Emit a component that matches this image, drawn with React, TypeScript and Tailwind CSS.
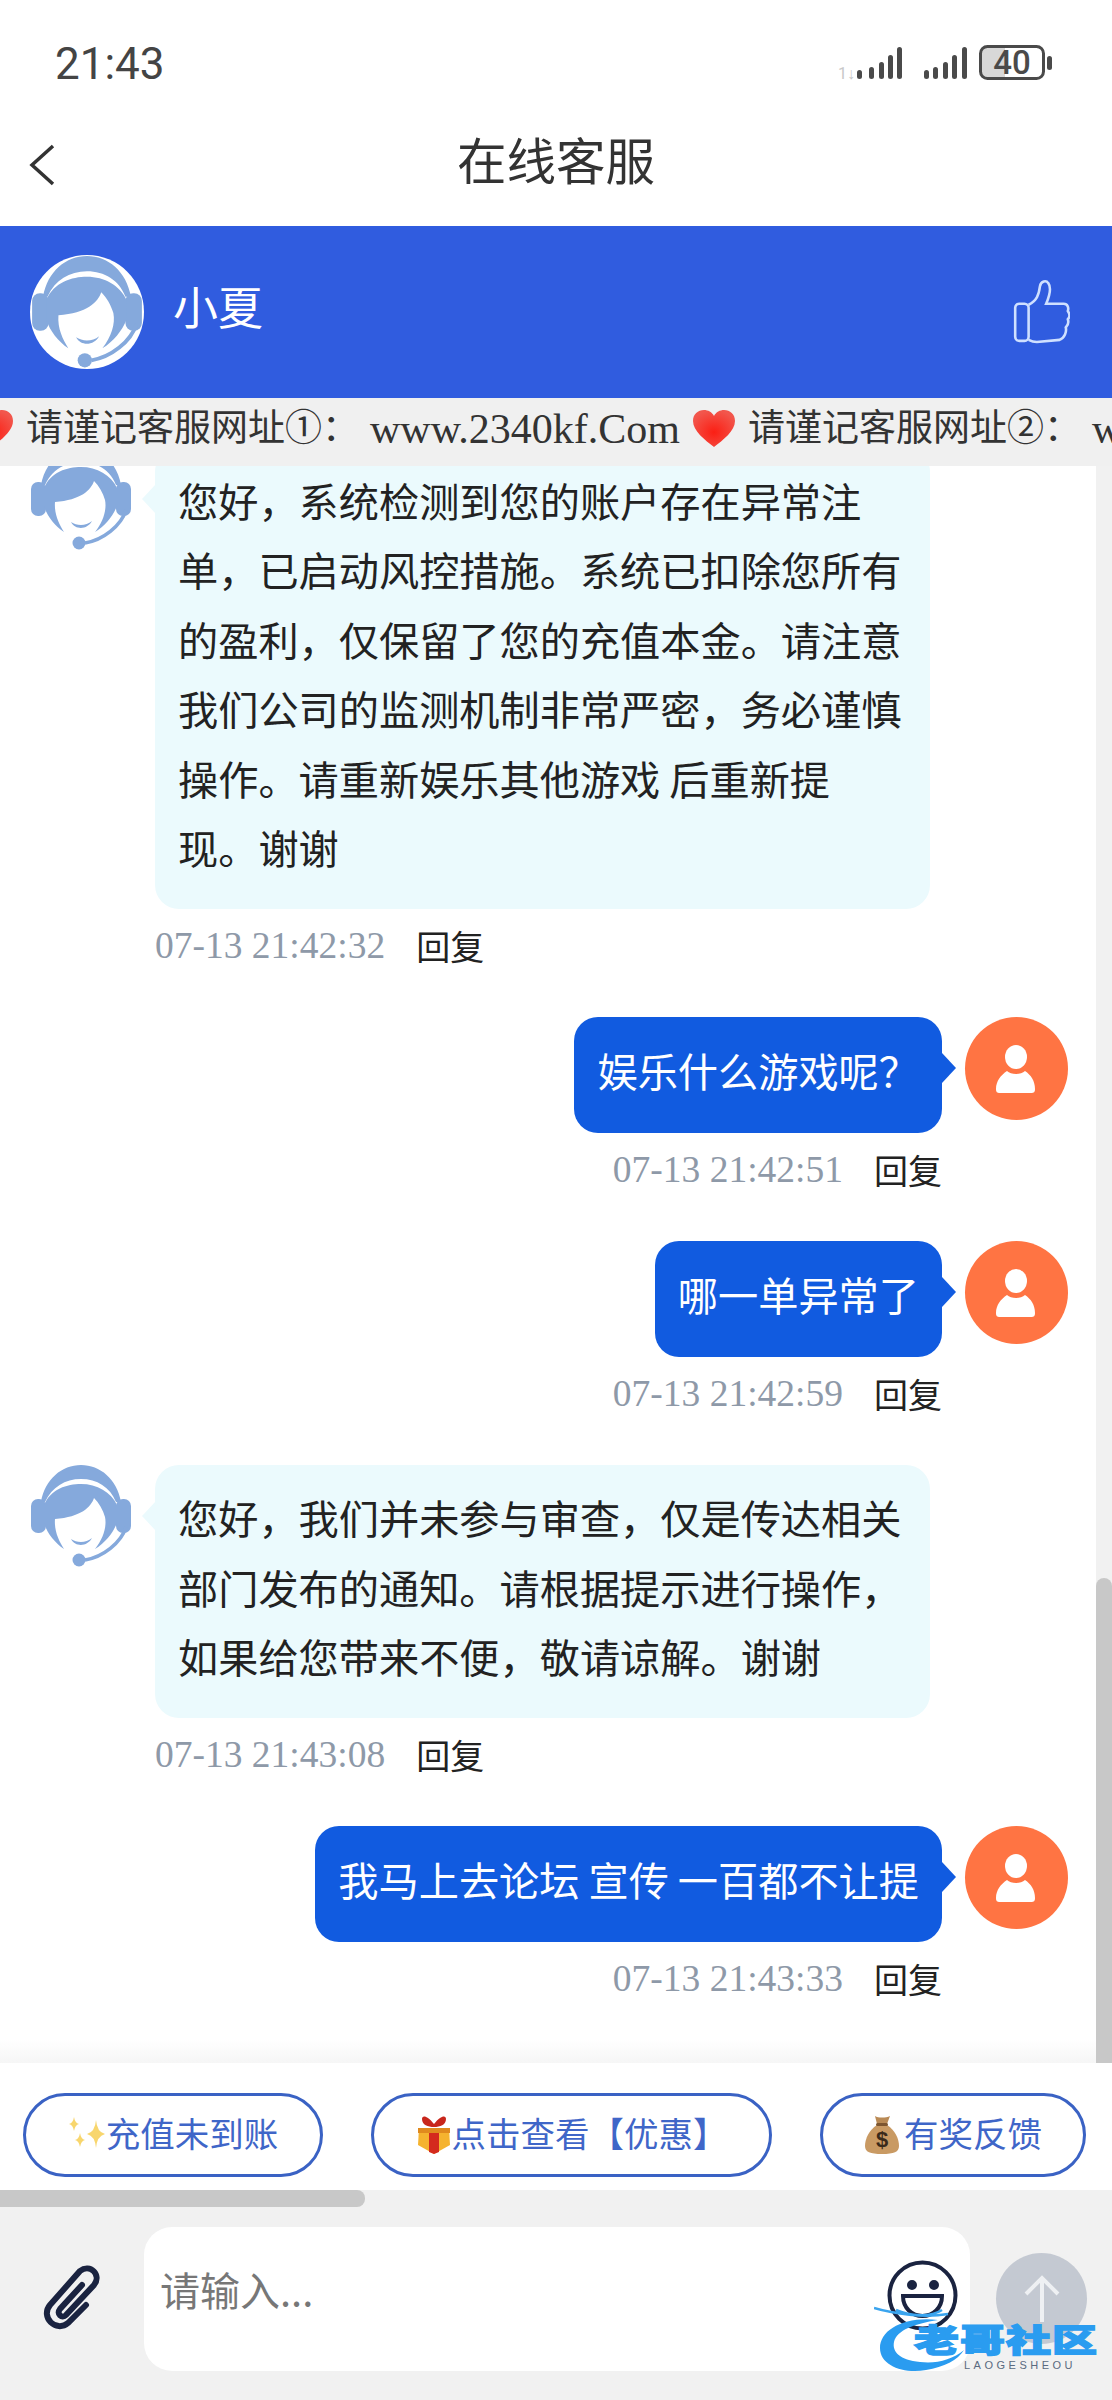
import React from 'react';

function AgentIcon({ className }: { className?: string }) {
    return (
        <svg className={className} viewBox="0 0 100 102" fill="#85a9dc">
            <path d="M10 37C14 14 31 0 50 0C69 0 86 14 90 37L85 37C79 22 66 14 50 14C34 14 21 22 14 37Z" />
            <rect x="0" y="34" width="15" height="34" rx="7" />
            <rect x="85" y="34" width="15" height="34" rx="7" />
            <path d="M13 40C20 24 36 19 50 19C66 19 80 27 86 40L86 58C82 68 74 78 64 84C72 74 76 62 74 52C72 45 68 38 63 33C60 42 50 52 24 54C23 66 28 76 33 84C24 78 16 68 13 58Z" />
            <path d="M40 74C46 78 55 78 61 73C57 81 45 83 40 74Z" />
            <path d="M95 62C90 78 72 92 54 95" fill="none" stroke="#85a9dc" strokeWidth="3.5" />
            <circle cx="48" cy="95" r="6.5" />
        </svg>
    );
}

function UserAvatar() {
    return (
        <div className="w-[103px] h-[103px] rounded-full bg-[#ff7443] flex items-center justify-center shrink-0">
            <svg className="w-[103px] h-[103px]" viewBox="0 0 103 103" fill="#fff">
                <ellipse cx="51" cy="40" rx="11" ry="12" />
                <path d="M42 54C46 58 56 58 60 54C66 58 70 64 70 72C70 75 69 76 66 76L35 76C32 76 31 75 31 72C31 64 36 58 42 54Z" />
            </svg>
        </div>
    );
}

function Heart({ className }: { className?: string }) {
    return (
        <svg className={className} viewBox="0 0 42 38">
            <defs>
                <radialGradient id="heartFill" cx="50%" cy="60%" r="60%">
                    <stop offset="0%" stopColor="#fb1f14" />
                    <stop offset="100%" stopColor="#f2564c" />
                </radialGradient>
            </defs>
            <path d="M21 37C12 30 0 21 0 11C0 4 5 0 11 0C15 0 19 2 21 6C23 2 27 0 31 0C37 0 42 4 42 11C42 21 30 30 21 37Z" fill="url(#heartFill)" />
        </svg>
    );
}

function Sparkles() {
    return (
        <svg className="w-[38px] h-[40px] shrink-0" viewBox="0 0 38 40" fill="#f8d66d">
            <path d="M28 5Q29 17 37 19Q29 21 28 33Q27 21 19 19Q27 17 28 5Z" />
            <path d="M6 2Q7 8 11 9Q7 10 6 16Q5 10 1 9Q5 8 6 2Z" />
            <path d="M12 18Q13 24 17 25Q13 26 12 32Q11 26 7 25Q11 24 12 18Z" />
        </svg>
    );
}

function Gift() {
    return (
        <svg className="w-[36px] h-[40px] shrink-0" viewBox="0 0 36 40">
            <path d="M3 13L33 13L34 30L18 39L2 30Z" fill="#f5b32f" />
            <path d="M13 13L23 13L23 37L18 39L13 37Z" fill="#d42a1e" />
            <path d="M2 13L34 13L34 18L2 18Z" fill="#e08a1e" />
            <path d="M18 12C12 12 6 10 6 4C6 0 11 0 18 9C25 0 30 0 30 4C30 10 24 12 18 12Z" fill="#c8261c" />
        </svg>
    );
}

function MoneyBag() {
    return (
        <svg className="w-[36px] h-[40px] shrink-0" viewBox="0 0 36 40">
            <path d="M11 1C14 3 22 3 26 1L23 9L13 9Z" fill="#b98a55" />
            <path d="M13 10L23 10C31 15 35 24 35 31C35 37 30 39 18 39C6 39 1 37 1 31C1 24 5 15 13 10Z" fill="#c99a63" />
            <rect x="12" y="8" width="12" height="3" rx="1.5" fill="#7d5630" />
            <text x="18" y="32" textAnchor="middle" fontSize="22" fontWeight="700" fill="#3a2a1a" fontFamily="Liberation Sans, sans-serif">$</text>
        </svg>
    );
}

function Bars({ xs }: { xs: number[] }) {
    const tops = [25, 22, 17, 10, 2];
    return (
        <>
            {xs.map((x, i) => (
                <rect key={x} x={x} y={tops[i]} width="5" height={34 - tops[i]} rx="2.5" fill="#4a4a4a" />
            ))}
        </>
    );
}

function StatusIcons() {
    return (
        <svg className="w-[220px] h-[46px] mt-[9px]" viewBox="0 0 220 46">
            <text x="6" y="34" fontSize="16" fill="#c8c8c8" fontFamily="Roboto, sans-serif">1↓</text>
            <Bars xs={[25, 37, 47, 56, 65]} />
            <Bars xs={[92, 101, 111, 120, 130]} />
            <path d="M150 2L173 2L173 33L150 33Z" fill="#d8d8d8" />
            <rect x="148.500" y="1.500" width="63" height="32" rx="7" fill="none" stroke="#4a4a4a" strokeWidth="3" />
            <rect x="215" y="11" width="5" height="14" rx="2.500" fill="#4a4a4a" />
            <text x="180" y="29" textAnchor="middle" fontSize="33" fontWeight="500" fill="#4a4a4a" fontFamily="Roboto, sans-serif">40</text>
        </svg>
    );
}

function Tip() {
    return <span className="ml-[13px] text-[37px]">请谨记客服网址</span>;
}

function MetaRow({ time, className }: { time: string; className?: string }) {
    return (
        <div className={`flex items-center h-[44px] mt-[16px] gap-[31px] ${className ?? ''}`}>
            <span className="text-[37.500px] text-[#8e99a8] font-['Liberation_Serif','Noto_Sans_CJK_SC',serif]">{time}</span>
            <span className="text-[34px] text-[#222] mb-[3px]">回复</span>
        </div>
    );
}

function AgentMessage({ text, time, className }: { text: string; time: string; className?: string }) {
    return (
        <div className={className}>
            <div className="flex pl-[30px] gap-[23px]">
                <AgentIcon className="w-[102px] h-[102px] shrink-0" />
                <div className="relative w-[775px] rounded-[24px] bg-[#ebfafd] px-[23px] pt-[17px] pb-[27px] text-[40.200px] leading-[69.500px] text-[#222] whitespace-pre-line">
                    <span className="absolute left-[-13px] top-[36px] w-0 h-0 border-y-[15px] border-y-transparent border-r-[14px] border-r-[#ebfafd]" />
                    {text}
                </div>
            </div>
            <MetaRow time={time} className="pl-[155px]" />
        </div>
    );
}

function UserMessage({ text, time }: { text: string; time: string }) {
    return (
        <div>
            <div className="flex justify-end pr-[28px] gap-[23px]">
                <div className="relative rounded-[24px] bg-[#115be0] px-[23px] pt-[18px] pb-[28px] text-[40.200px] leading-[69.500px] text-white whitespace-pre">
                    <span className="absolute right-[-14px] top-[36px] w-0 h-0 border-y-[15px] border-y-transparent border-l-[14px] border-l-[#115be0]" />
                    {text}
                </div>
                <UserAvatar />
            </div>
            <MetaRow time={time} className="justify-end pr-[154px]" />
        </div>
    );
}

export default function App() {
    return (
        <div className="w-[1112px] h-[2400px] overflow-hidden relative bg-white font-['Noto_Sans_CJK_SC',sans-serif]">
            <div className="h-[100px] pt-[36px] pl-[55px] pr-[60px] flex justify-between items-start">
                <span className="text-[44px] leading-[56px] text-[#444] font-['Roboto',sans-serif]">21:43</span>
                <StatusIcons />
            </div>

            <div className="h-[126px] flex items-center justify-center relative">
                <svg className="absolute left-[28px] top-[44px] w-[28px] h-[42px]" viewBox="0 0 28 42" fill="none" stroke="#333" strokeWidth="3.500">
                    <path d="M25 2L4 21L25 40" />
                </svg>
                <h1 className="text-[49.500px] text-[#333] font-normal mb-[8px]">在线客服</h1>
            </div>

            <div className="h-[172px] bg-[#305cdf] flex items-center pl-[30px] pr-[42px]">
                <div className="w-[114px] h-[114px] rounded-full bg-white overflow-hidden flex items-center justify-center shrink-0">
                    <AgentIcon className="w-[112px] h-[112px] shrink-0" />
                </div>
                <span className="ml-[29px] text-[45px] text-white mb-[12px]">小夏</span>
                <svg className="ml-auto w-[58px] h-[64px]" viewBox="0 0 56 62" fill="none" stroke="#cfe0ff" strokeWidth="2.500">
                    <rect x="3" y="23" width="13" height="36" rx="4" />
                    <path d="M16 24C24 20 26 14 27 6C28 1 33 0 35 3C38 7 36 16 33 23L50 23C54 23 55 27 54 30C56 33 56 36 54 38C55 41 54 44 52 46C53 50 51 56 46 58L24 60C20 60 18 59 16 58" />
                </svg>
            </div>

            <div className="h-[68px] pb-[6px] bg-[#f0f0f0] flex items-center whitespace-nowrap overflow-hidden text-[#333] font-['Liberation_Serif','Noto_Sans_CJK_SC',serif]">
                <Heart className="w-[42px] h-[38px] ml-[-29px] shrink-0" />
                <Tip />
                <span className="text-[37px]">①：</span>
                <span className="text-[42px] ml-[11px]">www.2340kf.Com</span>
                <Heart className="w-[42px] h-[38px] ml-[13px] shrink-0" />
                <Tip />
                <span className="text-[37px]">②：</span>
                <span className="text-[42px] ml-[11px]">www.2340kf.Com</span>
            </div>

            <div className="h-[1597px] relative overflow-hidden flex">
                <div className="w-[1096px] flex flex-col gap-[48.500px] mt-[-18.500px]">
                    <AgentMessage
                        text={'您好，系统检测到您的账户存在异常注单，已启动风控措施。系统已扣除您所有的盈利，仅保留了您的充值本金。请注意我们公司的监测机制非常严密，务必谨慎操作。请重新娱乐其他游戏 后重新提\n现。谢谢'}
                        time="07-13 21:42:32"
                    />
                    <UserMessage text="娱乐什么游戏呢？" time="07-13 21:42:51" />
                    <UserMessage text="哪一单异常了" time="07-13 21:42:59" />
                    <AgentMessage
                        text="您好，我们并未参与审查，仅是传达相关部门发布的通知。请根据提示进行操作，如果给您带来不便，敬请谅解。谢谢"
                        time="07-13 21:43:08"
                    />
                    <UserMessage text="我马上去论坛 宣传 一百都不让提" time="07-13 21:43:33" />
                </div>
                <div className="w-[16px] bg-[#f1f1f1] flex flex-col justify-end">
                    <div className="h-[485px] bg-[#c8c8c8] rounded-t-[8px]" />
                </div>
                <div className="absolute left-0 bottom-0 w-[1096px] h-[24px] bg-gradient-to-b from-white to-[#f6f6f6]" />
            </div>

            <div className="h-[127px] flex items-start pt-[30px] gap-[48px] pl-[23px] text-[34.500px] text-[#3f66c8] bg-white">
                <div className="w-[300px] h-[84px] rounded-full border-[3px] border-[#3a62c4] flex items-center justify-center">
                    <Sparkles />
                    <span className="mb-[4px]">充值未到账</span>
                </div>
                <div className="w-[401px] h-[84px] rounded-full border-[3px] border-[#3a62c4] flex items-center justify-center">
                    <Gift />
                    <span className="mb-[4px]">点击查看【优惠】</span>
                </div>
                <div className="w-[266px] h-[84px] rounded-full border-[3px] border-[#3a62c4] flex items-center justify-center">
                    <MoneyBag />
                    <span className="ml-[4px] mb-[4px]">有奖反馈</span>
                </div>
            </div>

            <div className="h-[210px] bg-[#f1f1f1]">
                <div className="w-[365px] h-[17px] bg-[#c8c8c8] rounded-r-[8px]" />
                <div className="flex items-start pl-[36px] mt-[20px]">
                    <svg className="w-[72px] h-[66px] mt-[38px] shrink-0" viewBox="0 0 72 66" fill="none" stroke="#1a2340" strokeWidth="6" strokeLinecap="round">
                        <path d="M46 20L24 44C20 49 26 54 30 50L58 20C66 10 54 -2 44 6L14 40C4 52 20 68 32 58L50 40" />
                    </svg>
                    <div className="ml-[36px] w-[826px] h-[144px] bg-white rounded-[28px] flex justify-between pl-[16px] pr-[12px]">
                        <span className="text-[40px] text-[#777] mt-[34px] leading-[56px]">请输入...</span>
                        <svg className="w-[71px] h-[71px] mt-[33px]" viewBox="0 0 71 71" fill="none" stroke="#1a2340" strokeWidth="4">
                            <circle cx="35.500" cy="35.500" r="33" />
                            <circle cx="25" cy="25" r="3" fill="#1a2340" />
                            <circle cx="47" cy="25" r="3" fill="#1a2340" />
                            <path d="M16 36L55 36C55 48 46 56 35.500 56C25 56 16 48 16 36Z" />
                        </svg>
                    </div>
                    <div className="ml-[26px] w-[91px] h-[91px] mt-[26px] rounded-full bg-[#c4c9d2] flex items-center justify-center shrink-0">
                        <svg className="w-[40px] h-[50px]" viewBox="0 0 40 50" fill="none" stroke="#eef0f3" strokeWidth="4">
                            <path d="M20 48L20 4M4 20L20 4L36 20" />
                        </svg>
                    </div>
                </div>
            </div>

            <div className="absolute left-[874px] top-[2304px] w-[224px] h-[72px]">
                <svg className="absolute inset-0 w-[224px] h-[72px]" viewBox="0 0 224 72" fill="none">
                    <path d="M64 16C30 12 6 26 6 44C6 62 30 70 52 66C70 63 84 56 90 46C78 56 62 60 46 58C26 56 18 48 20 38C23 26 40 20 64 16Z" fill="#2a9cf0" />
                    <path d="M0 4C20 10 50 14 74 10M22 6C36 12 56 14 68 6" stroke="#3aa4ee" strokeWidth="2.500" />
                </svg>
                <span className="absolute left-[40px] top-[8px] w-[184px] text-[45px] leading-[54px] font-black tracking-[1px] text-[#2a9cf0] [-webkit-text-stroke:2px_#2a9cf0] whitespace-nowrap scale-y-[0.7]">老哥社区</span>
                <span className="absolute left-[90px] top-[55px] text-[11px] leading-[12px] tracking-[3.500px] text-[#5a6a80] font-['Liberation_Sans',sans-serif]">LAOGESHEOU</span>
            </div>
        </div>
    );
}
